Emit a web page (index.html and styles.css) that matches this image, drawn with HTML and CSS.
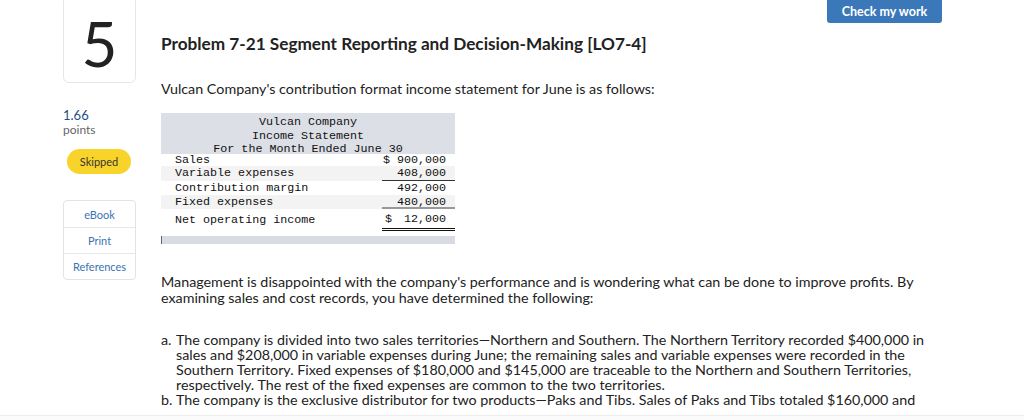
FILE: index.html
```html
<!DOCTYPE html>
<html>
<head>
<meta charset="utf-8">
<link rel="stylesheet" href="styles.css">
</head>
<body>
<div class="page">
  <aside class="side">
    <div class="qnum">5</div>
    <div class="score">
      <div class="pts">1.66</div>
      <div class="ptslabel">points</div>
    </div>
    <div class="status">Skipped</div>
    <div class="links">
      <a class="link">eBook</a>
      <a class="link">Print</a>
      <a class="link">References</a>
    </div>
  </aside>
  <main class="main">
    <div class="toolbar"><button class="check">Check my work</button></div>
    <h1 class="title">Problem 7-21 Segment Reporting and Decision-Making [LO7-4]</h1>
    <p class="intro">Vulcan Company's contribution format income statement for June is as follows:</p>
    <div class="stmt">
      <div class="stmt-head">
        <div>Vulcan Company</div>
        <div>Income Statement</div>
        <div>For the Month Ended June 30</div>
      </div>
      <div class="row first">
        <span class="lbl">Sales</span><span class="amt">$&nbsp;900,000</span>
      </div>
      <div class="row alt second">
        <span class="lbl">Variable expenses</span><span class="amt under">408,000</span>
      </div>
      <div class="row">
        <span class="lbl">Contribution margin</span><span class="amt">492,000</span>
      </div>
      <div class="row alt">
        <span class="lbl">Fixed expenses</span><span class="amt under2">480,000</span>
      </div>
      <div class="row net">
        <span class="lbl">Net operating income</span><span class="amt dbl"><span class="dollar">$</span>12,000</span>
      </div>
      <div class="scroll"></div>
    </div>
    <p class="para">Management is disappointed with the company's performance and is wondering what can be done to improve profits. By examining sales and cost records, you have determined the following:</p>
    <ol class="facts">
      <li><span class="mark">a.</span><span>The company is divided into two sales territories—Northern and Southern. The Northern Territory recorded $400,000 in sales and $208,000 in variable expenses during June; the remaining sales and variable expenses were recorded in the Southern Territory. Fixed expenses of $180,000 and $145,000 are traceable to the Northern and Southern Territories, respectively. The rest of the fixed expenses are common to the two territories.</span></li>
      <li><span class="mark">b.</span><span>The company is the exclusive distributor for two products—Paks and Tibs. Sales of Paks and Tibs totaled $160,000 and $740,000, respectively, during June.</span></li>
    </ol>
  </main>
</div>
<div class="footer"></div>
</body>
</html>
```
FILE: styles.css
```css
html, body {
  margin: 0;
  padding: 0;
  background: #fff;
  overflow: hidden;
}
body {
  font-family: Lato, "Noto Sans", sans-serif;
  color: #222;
  height: 420px;
}
.page {
  display: flex;
  gap: 25px;
  padding-left: 63px;
  margin-top: -4px;
}
.side {
  width: 73px;
  flex: none;
  display: flex;
  flex-direction: column;
}
.qnum {
  height: 87px;
  box-sizing: border-box;
  border: 1px solid #e6e6e6;
  border-radius: 6px;
  display: flex;
  align-items: center;
  justify-content: center;
  font-size: 62px;
  font-weight: 400;
  color: #222;
  padding-top: 6px;
}
.score {
  margin-top: 25px;
}
.pts {
  font-size: 13px;
  color: #1d4f86;
  line-height: 15px;
}
.ptslabel {
  font-size: 12px;
  color: #666;
  line-height: 14px;
}
.status {
  margin: 12px 0 0 4px;
  width: 64px;
  height: 25px;
  border-radius: 13px;
  background: #f8d42a;
  color: #333;
  font-size: 11px;
  display: flex;
  align-items: center;
  justify-content: center;
}
.links {
  margin-top: 26px;
  border: 1px solid #e3e3e3;
  border-radius: 4px;
  display: flex;
  flex-direction: column;
}
.link {
  height: 25px;
  display: flex;
  align-items: center;
  justify-content: center;
  font-size: 11px;
  color: #3b73b3;
  border-top: 1px solid #e8e8e8;
}
.link:first-child {
  border-top: none;
  height: 26px;
}
.main {
  width: 785px;
  flex: none;
}
.toolbar {
  display: flex;
  justify-content: flex-end;
  padding-right: 4px;
}
.check {
  width: 115px;
  height: 27px;
  padding-top: 4px;
  border: none;
  border-radius: 0 0 3px 3px;
  background: #3b78ba;
  color: #fff;
  font-family: Lato, sans-serif;
  font-weight: 700;
  font-size: 12.5px;
}
.title {
  margin: 11px 0 0;
  font-size: 17.2px;
  line-height: 20px;
  font-weight: 700;
  color: #222;
}
.intro {
  margin: 26px 0 0;
  font-size: 14.3px;
  line-height: 18px;
}
.stmt {
  margin-top: 15px;
  width: 294px;
  font-family: "Liberation Mono", "DejaVu Sans Mono", monospace;
  font-size: 11.7px;
  color: #111;
}
.stmt-head {
  background: #dcdfe6;
  text-align: center;
  line-height: 13.5px;
  padding: 3px 0 0;
  height: 38px;
}
.row {
  display: flex;
  justify-content: space-between;
  padding-left: 14px;
  height: 14px;
  line-height: 14px;
  white-space: nowrap;
}
.row.alt {
  background: #f3f3f3;
}
.row.first {
  height: 12px;
  line-height: 13px;
}
.row.second {
  height: 15px;
  line-height: 15px;
}
.amt {
  width: 64px;
  padding-right: 9px;
  text-align: right;
}
.under {
  border-bottom: 1px solid #333;
  height: 14px;
}
.under2 {
  border-bottom: 2px solid #999;
  height: 12px;
}
.row.net {
  height: 22px;
  line-height: 22px;
}
.dbl {
  display: flex;
  justify-content: space-between;
  box-sizing: border-box;
  width: 73px;
  padding-left: 3px;
  border-bottom: 3px double #111;
  height: 22px;
  line-height: 20px;
}
.scroll {
  margin-top: 5px;
  height: 8px;
  background: #d8dbe1;
  border-left: 1px solid #666;
}
.para {
  margin: 30px 0 0;
  font-size: 14.3px;
  line-height: 16px;
}
.facts {
  list-style: none;
  margin: 26px 0 0;
  padding: 0;
  font-size: 14.3px;
  line-height: 15px;
}
.facts li {
  display: flex;
}
.mark {
  width: 15px;
  flex: none;
}
.footer {
  position: fixed;
  left: 0;
  right: 0;
  bottom: 0;
  height: 11px;
  background: linear-gradient(#fff 6px, #ececec 6px, #ececec 7px, #fbfbfb 7px);
}
```
